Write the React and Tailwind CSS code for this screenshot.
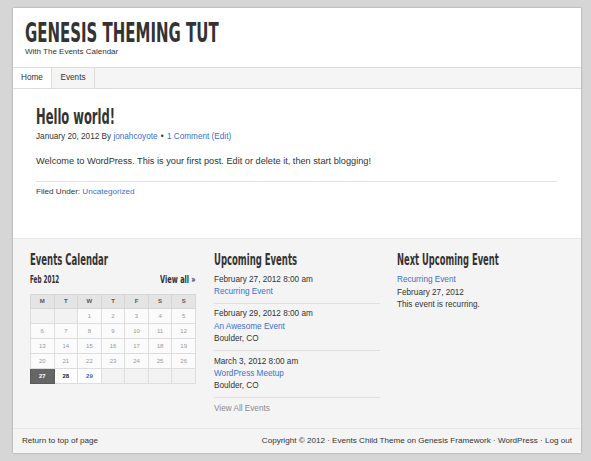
export default function App() {
  const head = { fontFamily: '"DejaVu Sans Condensed", "Liberation Sans", sans-serif' };
  const body = { fontFamily: '"Liberation Sans", Arial, sans-serif' };
  const days = [
    ["", "", "1", "2", "3", "4", "5"],
    ["6", "7", "8", "9", "10", "11", "12"],
    ["13", "14", "15", "16", "17", "18", "19"],
    ["20", "21", "22", "23", "24", "25", "26"],
    ["27", "28", "29", "", "", "", ""],
  ];
  const link = "text-[#3b70d4]";
  return (
    <div className="w-[591px] h-[461px] bg-[#d6d6d6] pt-[8px] pl-[13px] overflow-hidden" style={body}>
      <div className="w-[568px] h-[445px] bg-white shadow-[0_0_2px_rgba(0,0,0,0.3)] flex flex-col">
        <div className="h-[60px] pl-[12px] pt-[12px] border-b border-[#dddddd]">
          <div className="text-[26px] leading-[26px] font-bold text-[#333] whitespace-nowrap scale-x-[0.64] origin-left" style={head}>GENESIS THEMING TUT</div>
          <div className="text-[8px] leading-[10px] mt-[1px] text-[#333]">With The Events Calendar</div>
        </div>
        <div className="h-[21px] bg-[#f5f5f5] border-b border-[#dddddd] flex text-[8.2px] text-[#333]">
          <div className="w-[39px] bg-white border-r border-[#dddddd] flex items-center justify-center">Home</div>
          <div className="w-[43px] border-r border-[#dddddd] flex items-center justify-center">Events</div>
        </div>
        <div className="h-[149px] px-[23px] pt-[16px]">
          <div className="text-[21px] leading-[24px] font-bold text-[#333] whitespace-nowrap scale-x-[0.61] origin-left" style={head}>Hello world!</div>
          <div className="text-[8.2px] leading-[10px] mt-[3px] text-[#333]">
            January 20, 2012 By <span className={link}>jonahcoyote</span> <span className="mx-[1px]">•</span> <span className={link}>1 Comment (Edit)</span>
          </div>
          <div className="text-[9.2px] leading-[12px] mt-[13px] text-[#333]">Welcome to WordPress. This is your first post. Edit or delete it, then start blogging!</div>
          <div className="mt-[14px] border-t border-[#e2e2e2] w-[521px]"></div>
          <div className="text-[8.1px] leading-[10px] mt-[5px] text-[#333]">Filed Under: <span className={link}>Uncategorized</span></div>
        </div>
        <div className="h-[190px] bg-[#f4f4f4] border-t border-[#e8e8e8] flex pl-[17px] pt-[12px]">
          <div className="w-[166px]">
            <div className="text-[15px] leading-[18px] font-bold text-[#333] whitespace-nowrap scale-x-[0.63] origin-left" style={head}>Events Calendar</div>
            <div className="flex justify-between mt-[5px] text-[10px] leading-[12px] font-bold text-[#333]" style={head}>
              <span className="block scale-x-[0.63] origin-left whitespace-nowrap">Feb 2012</span>
              <span className="block scale-x-[0.73] origin-right whitespace-nowrap">View all »</span>
            </div>
            <table className="mt-[8px] w-[166px] border-collapse text-[6px] text-center table-fixed">
              <thead>
                <tr>
                  {["M", "T", "W", "T", "F", "S", "S"].map((d, i) => (
                    <th key={i} className="h-[14px] p-0 border border-[#d6d6d6] bg-[#e4e4e4] font-bold text-[#555]">{d}</th>
                  ))}
                </tr>
              </thead>
              <tbody>
                {days.map((row, r) => (
                  <tr key={r}>
                    {row.map((d, c) => {
                      let cls = "border-[#dddddd] text-[#999] bg-[#fbfbfb]";
                      if (d === "") cls = "border-[#dddddd] bg-[#f2f2f2]";
                      if (d === "27") cls = "border-[#5a5a5a] bg-[#666] text-white font-bold";
                      if (d === "28") cls = "border-[#dddddd] bg-white text-[#222] font-bold";
                      if (d === "29") cls = "border-[#dddddd] bg-white text-[#2a5fd0] font-bold";
                      return <td key={c} className={"h-[15px] p-0 border " + cls}>{d}</td>;
                    })}
                  </tr>
                ))}
              </tbody>
            </table>
          </div>
          <div className="w-[166px] ml-[18px] text-[8.2px] leading-[12.4px] text-[#333]">
            <div className="text-[15px] leading-[18px] font-bold text-[#333] whitespace-nowrap scale-x-[0.63] origin-left" style={head}>Upcoming Events</div>
            <div className="mt-[5px] pb-[4px] border-b border-[#e0e0e0]">
              <div>February 27, 2012 8:00 am</div>
              <div className={link}>Recurring Event</div>
            </div>
            <div className="pt-[4.5px] pb-[4.5px] border-b border-[#e0e0e0]">
              <div>February 29, 2012 8:00 am</div>
              <div className={link}>An Awesome Event</div>
              <div>Boulder, CO</div>
            </div>
            <div className="pt-[4.5px] pb-[4.5px] border-b border-[#e0e0e0]">
              <div>March 3, 2012 8:00 am</div>
              <div className={link}>WordPress Meetup</div>
              <div>Boulder, CO</div>
            </div>
            <div className="pt-[5px] text-[#8a8a8a]">View All Events</div>
          </div>
          <div className="w-[166px] ml-[17px] text-[8.2px] leading-[12.5px] text-[#333]">
            <div className="text-[15px] leading-[18px] font-bold text-[#333] whitespace-nowrap scale-x-[0.62] origin-left" style={head}>Next Upcoming Event</div>
            <div className={"mt-[5px] " + link}>Recurring Event</div>
            <div>February 27, 2012</div>
            <div>This event is recurring.</div>
          </div>
        </div>
        <div className="flex-1 bg-[#f4f4f4] border-t border-[#e8e8e8] flex items-center justify-between px-[9px] pt-[1px] text-[8.1px] text-[#333]">
          <span>Return to top of page</span>
          <span>Copyright © 2012 · Events Child Theme on Genesis Framework · WordPress · Log out</span>
        </div>
      </div>
    </div>
  );
}
